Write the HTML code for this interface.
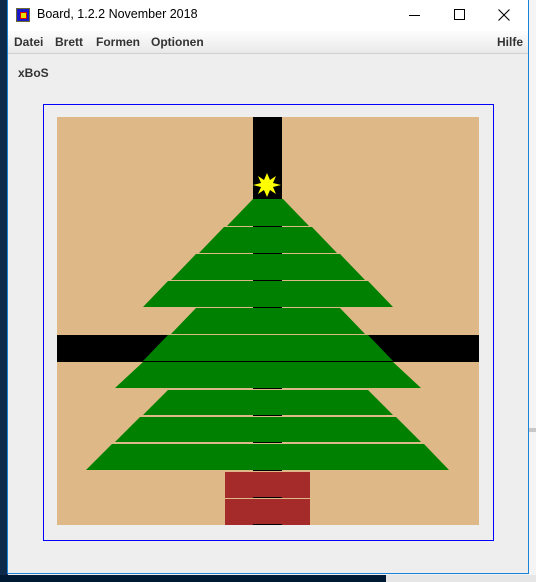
<!DOCTYPE html>
<html><head><meta charset="utf-8"><style>
html,body{margin:0;padding:0;}
body{width:536px;height:582px;position:relative;overflow:hidden;background:#f2f2f2;font-family:"Liberation Sans",sans-serif;}
.abs{position:absolute;}
</style></head><body>
<div class="abs" style="left:0;top:0;width:8px;height:582px;background:#0d2a4a"></div>
<div class="abs" style="left:0;top:575px;width:386px;height:7px;background:#011a33"></div>
<div class="abs" style="left:386px;top:575px;width:150px;height:7px;background:#e6e6e6"></div>
<div class="abs" style="left:529px;top:0;width:7px;height:575px;background:#f4f4f4"></div>
<div class="abs" style="left:529px;top:428px;width:7px;height:4px;background:#c8c8c8"></div>
<!-- window -->
<div class="abs" style="left:7px;top:0;width:520px;height:573px;border:1px solid #1883d7;border-top:none;background:#eeeeee"></div>
<div class="abs" style="left:8px;top:0;width:520px;height:31px;background:#fff"></div>
<div class="abs" style="left:8px;top:31px;width:520px;height:22px;background:linear-gradient(#fdfdfd,#e9e9e9)"></div>
<div class="abs" style="left:8px;top:53px;width:520px;height:1px;background:#cfcfcf"></div>
<!-- icon -->
<div class="abs" style="left:16px;top:8px;width:12px;height:12px;background:#1a1ac8;border:1px solid #6b6b30"></div>
<div class="abs" style="left:20px;top:12px;width:5px;height:5px;background:#e8e000;border:1px solid #d00"></div>
<div class="abs" style="left:37px;top:7px;font-size:12.5px;color:#000;">Board, 1.2.2 November 2018</div>
<div class="abs" style="left:409px;top:15px;width:11px;height:1px;background:#000"></div>
<div class="abs" style="left:454px;top:9px;width:9px;height:9px;border:1px solid #000"></div>
<svg class="abs" style="left:498px;top:9px" width="12" height="12"><path d="M0.5 0.5L11.5 11.5M11.5 0.5L0.5 11.5" stroke="#000" stroke-width="1.1"/></svg>
<div class="abs" style="top:35px;left:14px;font-size:12px;font-weight:bold;color:#333;">Datei</div>
<div class="abs" style="top:35px;left:55px;font-size:12px;font-weight:bold;color:#333;">Brett</div>
<div class="abs" style="top:35px;left:96px;font-size:12px;font-weight:bold;color:#333;">Formen</div>
<div class="abs" style="top:35px;left:151px;font-size:12px;font-weight:bold;color:#333;">Optionen</div>
<div class="abs" style="top:35px;left:497px;font-size:12px;font-weight:bold;color:#333;">Hilfe</div>
<div class="abs" style="top:66px;left:18px;font-size:12px;font-weight:bold;color:#333;">xBoS</div>
<div class="abs" style="left:43px;top:104px;width:449px;height:435px;border:1px solid #0000ff"></div>
<svg class="abs" style="left:0;top:0" width="536" height="582">
<rect x="57" y="117" width="422" height="408" fill="#deb887"/>
<rect x="253" y="117" width="29" height="82" fill="#000"/>
<rect x="57" y="335" width="422" height="27" fill="#000"/>
<g fill="#008000">
<polygon points="253,199 283,199 309,226 227,226"/>
<polygon points="224,227 312,227 337,253 199,253"/>
<polygon points="196,254 340,254 365,280 171,280"/>
<polygon points="168,281 368,281 393,307 143,307"/>
<polygon points="196,308 340,308 365,334 171,334"/>
<polygon points="168,335 368,335 393,361 143,361"/>
<polygon points="143,362 393,362 421,388 115,388"/>
<polygon points="168,390 368,390 393,415 143,415"/>
<polygon points="140,417 396,417 421,442 115,442"/>
<polygon points="112,444 424,444 449,470 86,470"/>
</g>
<rect x="225" y="472" width="85" height="26" fill="#a52a2a"/>
<rect x="225" y="499" width="85" height="26" fill="#a52a2a"/>
<g fill="#000">
<rect x="253" y="226" width="29" height="1"/><rect x="253" y="253" width="29" height="1"/>
<rect x="253" y="280" width="29" height="1"/><rect x="253" y="307" width="29" height="1"/>
<rect x="253" y="388" width="29" height="1"/><rect x="253" y="415" width="29" height="1"/>
<rect x="253" y="442" width="29" height="1"/><rect x="253" y="470" width="29" height="1"/>
<rect x="253" y="497" width="29" height="1"/><rect x="253" y="524" width="29" height="1"/>
</g>
<polygon fill="#ffff00" points="267,173 270,180 276,176 273,183 281,185 273,187 276,194 270,190 267,197 264,190 258,194 261,187 253,185 261,183 258,176 264,180"/>
</svg>
</body></html>
